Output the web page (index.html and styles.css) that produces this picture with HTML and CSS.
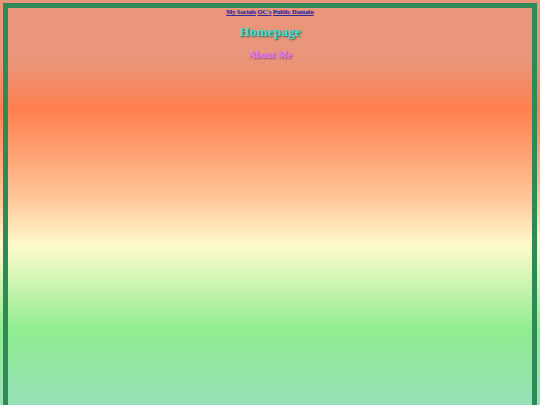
FILE: index.html
```html
<!DOCTYPE html>
<html>
<head>
<meta charset="utf-8">
<link rel="stylesheet" href="styles.css">
</head>
<body>
<div class="frame">
  <nav class="nav">
    <a href="#">My Socials</a> <a href="#">OC's</a> <a href="#">Public Domain</a>
  </nav>
  <h1 class="title">Homepage</h1>
  <h2 class="sub">About Me</h2>
</div>
</body>
</html>
```
FILE: styles.css
```css
html {
  margin: 0;
  padding: 0;
  background: linear-gradient(to bottom,
    #e9967a 0px, #e9967a 60px,
    #ff7f50 110px,
    #ffc89a 200px,
    #fffacd 245px,
    #90ee90 330px,
    #98e0b8 405px);
  min-height: 405px;
}
body {
  margin: 3px;
  padding: 0;
  font-family: "Liberation Serif", "Times New Roman", serif;
}
.frame {
  border: 5px solid #2e8b57;
  min-height: 500px;
  text-align: center;
}
.nav {
  font-size: 6.4px;
  font-weight: bold;
  line-height: 8px;
  padding-top: 0;
}
.nav a {
  color: #2f2a9a;
  text-shadow: 0 0 1px #8a6aa0;
}
.title {
  margin: 7px 0 0 0;
  font-size: 13.5px;
  line-height: 18px;
  color: #40e0d0;
  text-shadow: 1px 1px 2px #1f5a50;
}
.sub {
  margin: 7px 0 0 0;
  font-size: 10px;
  line-height: 13px;
  color: #ee82ee;
  text-shadow: 1px 1px 2px #7a3a7a;
}
```
